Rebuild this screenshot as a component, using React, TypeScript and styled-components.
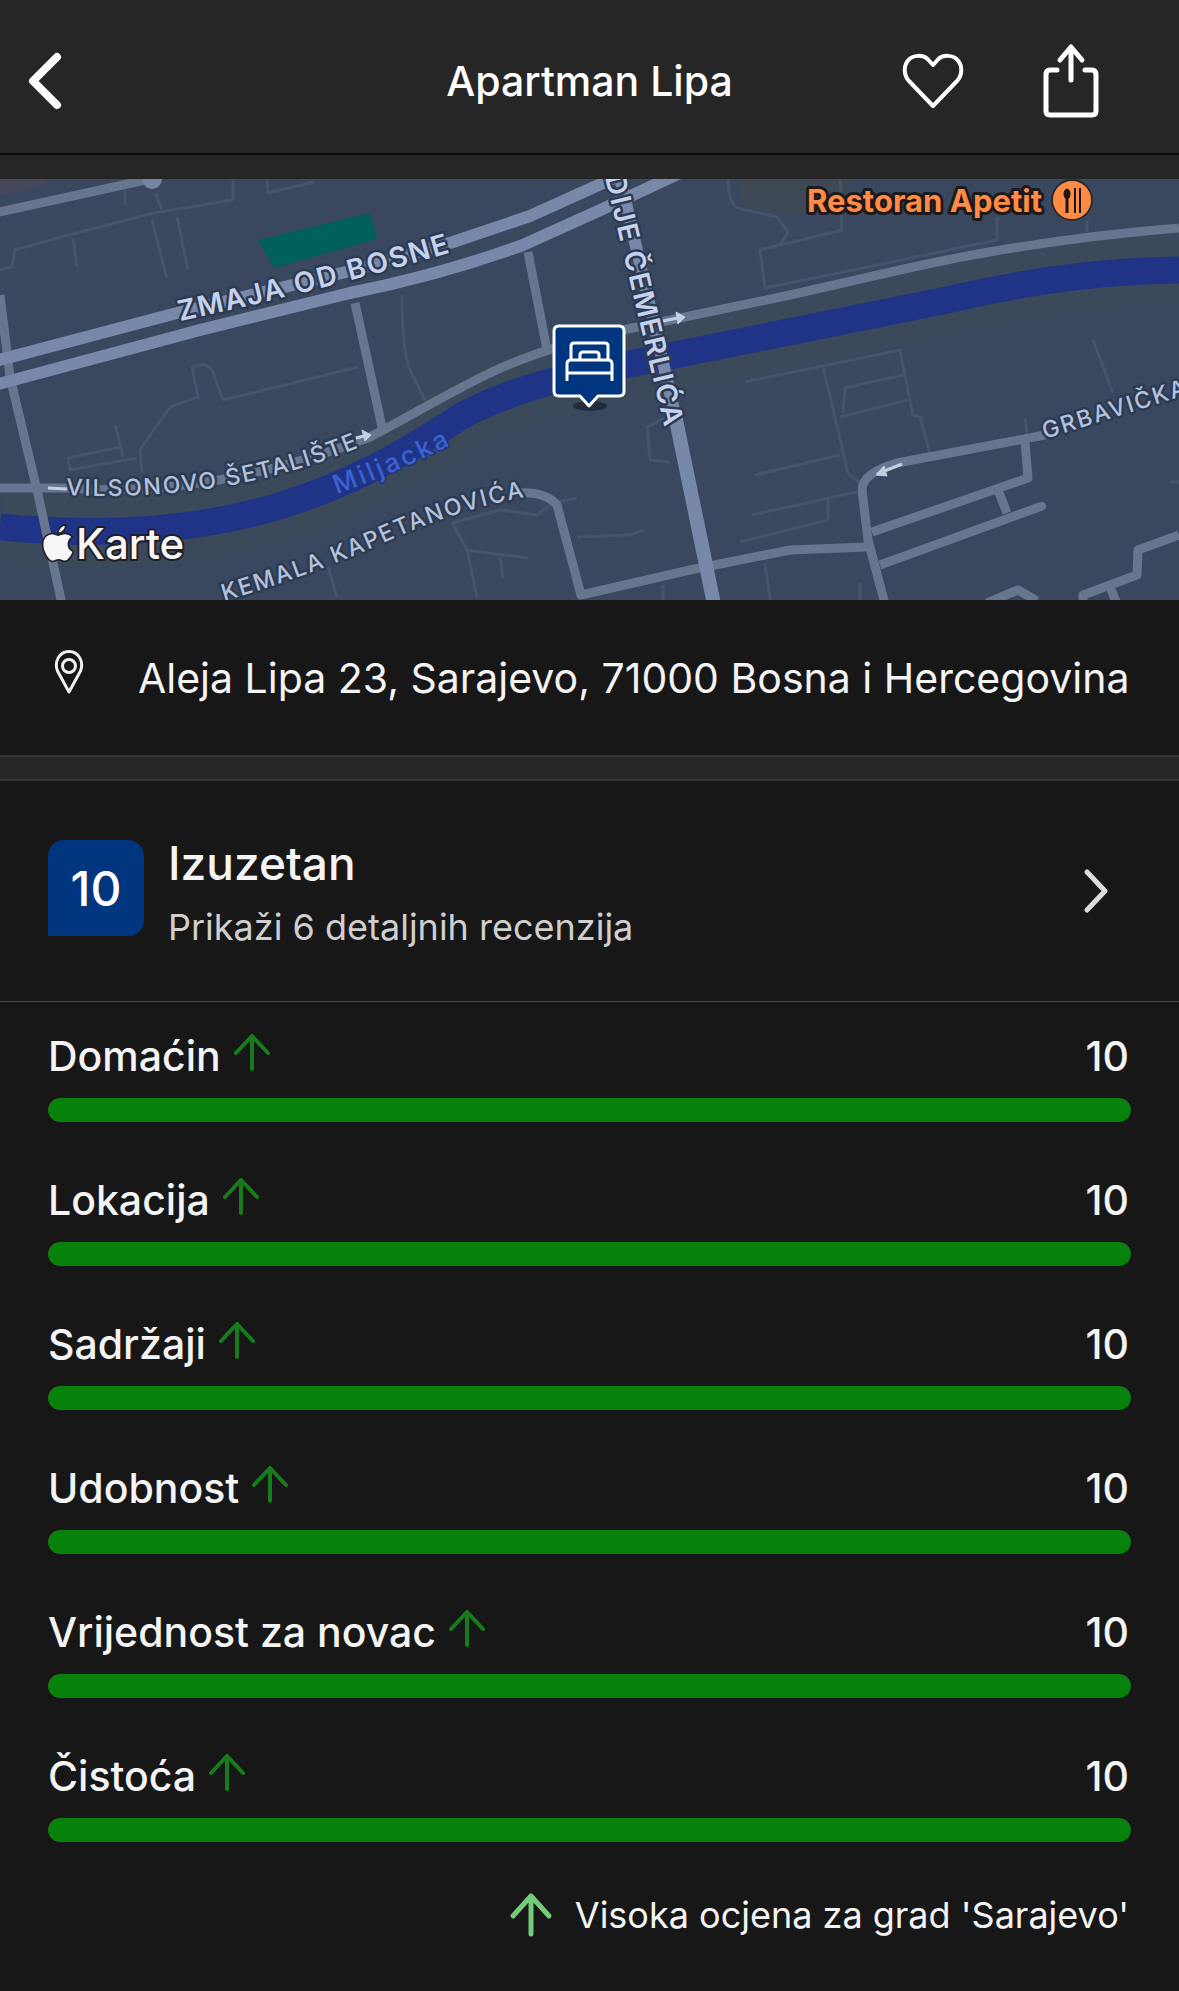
import React from "react";
import styled, { createGlobalStyle } from "styled-components";
import { FaApple } from "react-icons/fa";

const GlobalStyle = createGlobalStyle`
  *, *::before, *::after { box-sizing: border-box; }
  body {
    margin: 0;
    background: #171717;
    color: #f4f4f4;
    font-family: Inter, "Noto Sans", sans-serif;
  }
  h1, h2, p, ul { margin: 0; padding: 0; }
  ul { list-style: none; }
`;

const Page = styled.div`
  display: flex;
  flex-direction: column;
  min-height: 100vh;
  background: #171717;
`;

const Header = styled.header`
  display: grid;
  grid-template-columns: 1fr auto 1fr;
  align-items: center;
  padding: 8px 68px 0 4px;
  height: 153px;
  background: #262626;
`;

const HeaderTitle = styled.h1`
  font-size: 41px;
  line-height: 52px;
  font-weight: 500;
  color: #ffffff;
  padding-left: 64px;
`;

const Actions = styled.div`
  display: flex;
  justify-content: flex-end;
  gap: 58px;
`;

const IconButton = styled.button`
  display: flex;
  align-items: center;
  justify-content: center;
  width: 80px;
  height: 80px;
  padding: 0;
  border: 0;
  background: none;
  color: #ffffff;
  cursor: pointer;
`;

const HeaderGap = styled.div`
  height: 26px;
  background: #262626;
  border-top: 2px solid #0c0c0c;
`;

const MapView = styled.svg`
  display: block;
  width: 100%;
  height: auto;
  background: #39485e;
  font-family: Inter, "Noto Sans", sans-serif;
`;

const StreetLabel = styled.text<{ $major?: boolean }>`
  font-size: ${(p) => (p.$major ? 28 : 23)}px;
  font-weight: ${(p) => (p.$major ? 600 : 500)};
  letter-spacing: 2px;
  fill: ${(p) => (p.$major ? "#c6d2ec" : "#b4c1da")};
  stroke: #2c3a52;
  stroke-width: 5px;
  stroke-linejoin: round;
  paint-order: stroke;
`;

const RiverLabel = styled.text`
  font-size: 26px;
  font-weight: 500;
  letter-spacing: 3px;
  fill: #3c61d2;
  stroke: #1f3586;
  stroke-width: 3px;
  paint-order: stroke;
`;

const PlaceLabel = styled.text`
  font-size: 31px;
  font-weight: 700;
  fill: #ff8b45;
  stroke: #1e1a1c;
  stroke-width: 6px;
  stroke-linejoin: round;
  paint-order: stroke;
`;

const Attribution = styled.text`
  font-size: 42px;
  font-weight: 500;
  fill: #f6f6f6;
  stroke: #1f2024;
  stroke-width: 4px;
  stroke-linejoin: round;
  paint-order: stroke;
`;

const AddressRow = styled.section`
  display: flex;
  align-items: center;
  gap: 54px;
  height: 155px;
  padding: 0 48px 0 54px;
`;

const PinIcon = styled.svg`
  flex: none;
  margin-bottom: 12px;
`;

const AddressText = styled.p`
  font-size: 41px;
  line-height: 52px;
  white-space: nowrap;
`;

const Separator = styled.div`
  height: 26px;
  background: #262626;
  border: solid #343434;
  border-width: 2px 0;
`;

const ScoreButton = styled.button`
  display: flex;
  align-items: center;
  gap: 24px;
  width: 100%;
  height: 221px;
  padding: 0 69px 6px 48px;
  border: 0;
  border-bottom: 1px solid #484848;
  background: none;
  color: inherit;
  font: inherit;
  text-align: left;
  cursor: pointer;
`;

const ScoreBadge = styled.span`
  display: flex;
  align-items: center;
  justify-content: center;
  width: 96px;
  height: 96px;
  border-radius: 16px 16px 16px 0;
  background: #003580;
  color: #ffffff;
  font-size: 48px;
  font-weight: 500;
`;

const ScoreTexts = styled.span`
  display: flex;
  flex: 1;
  flex-direction: column;
  gap: 14px;
  padding-top: 8px;
`;

const ScoreTitle = styled.span`
  font-size: 46px;
  line-height: 56px;
  font-weight: 500;
`;

const ScoreSubtitle = styled.span`
  font-size: 36px;
  line-height: 44px;
  color: #cfcfcf;
`;

const Chevron = styled.svg`
  flex: none;
  margin-top: 6px;
`;

const RatingList = styled.ul`
  display: flex;
  flex-direction: column;
  gap: 52px;
  padding: 28px 48px 0;
`;

const RatingItem = styled.li`
  display: flex;
  flex-direction: column;
  gap: 16px;
`;

const RatingHead = styled.div`
  display: flex;
  align-items: center;
  gap: 12px;
  height: 52px;
  padding: 0 2px 0 0;
  font-size: 41px;
  line-height: 52px;
  font-weight: 500;
`;

const RatingArrow = styled.svg`
  margin-bottom: 8px;
`;

const RatingValue = styled.span`
  margin-left: auto;
`;

const Track = styled.div`
  height: 24px;
  border-radius: 12px;
  background: #2d2d2d;
  overflow: hidden;
`;

const Fill = styled.div`
  height: 100%;
  border-radius: 12px;
  background: #07820b;
`;

const Legend = styled.p`
  display: flex;
  align-items: center;
  justify-content: flex-end;
  gap: 22px;
  padding: 48px 50px;
  font-size: 36px;
  line-height: 50px;
`;

const ratings = [
  { label: "Domaćin", value: 10 },
  { label: "Lokacija", value: 10 },
  { label: "Sadržaji", value: 10 },
  { label: "Udobnost", value: 10 },
  { label: "Vrijednost za novac", value: 10 },
  { label: "Čistoća", value: 10 },
];

const BackIcon = () => (
  <svg width="40" height="64" viewBox="0 0 40 64" fill="none" aria-hidden="true">
    <path d="M33 8 9 32l24 24" stroke="currentColor" strokeWidth="8" strokeLinecap="round" strokeLinejoin="round" />
  </svg>
);

const HeartIcon = () => (
  <svg width="64" height="60" viewBox="0 0 64 60" fill="none" aria-hidden="true">
    <path
      d="M32 55 8 30C2.500 24 2.500 15 7 9.500 12 3.500 22 3.500 27 8.500L32 14l5-5.500C42 3.500 52 3.500 57 9.500c4.500 5.500 4.500 14.500-1 20.500Z"
      stroke="currentColor"
      strokeWidth="4"
      strokeLinejoin="round"
    />
  </svg>
);

const ShareIcon = () => (
  <svg width="58" height="76" viewBox="0 0 58 76" fill="none" stroke="currentColor" strokeWidth="5" strokeLinecap="round" strokeLinejoin="round" aria-hidden="true">
    <path d="M15 27H8q-4 0-4 5v36q0 4 4 4h42q4 0 4-4V32q0-5-4-5h-7" />
    <path d="M29 37V5M18 17 29 4l11 13" />
  </svg>
);

const Pin = () => (
  <PinIcon width="30" height="46" viewBox="0 0 30 46" fill="none" stroke="#f0f0f0" strokeWidth="3" strokeLinejoin="round" aria-hidden="true">
    <path d="M15 43 3.500 22C0 13 5 2.500 15 2.500S30 13 26.500 22Z" />
    <circle cx="15" cy="17" r="6.500" />
  </PinIcon>
);

const UpArrow = () => (
  <RatingArrow width="38" height="38" viewBox="0 0 38 38" fill="none" stroke="#177d1b" strokeWidth="4" strokeLinecap="round" strokeLinejoin="round" aria-hidden="true">
    <path d="M19 36V3M3 20 19 3l16 17" />
  </RatingArrow>
);

const minorStreets = [
  "M0 91 12 88 15 71 61 58 154 34 233 21V0",
  "M73 59 77 88M125 11V26M155 14 162 31M152 41 167 99M177 38 188 91",
  "M267 0 268 14 314 3",
  "M358 188 223 221 212 191Q205 182 192 188L198 218 170 228 140 271 142 294",
  "M115 246 123 278M120 268 68 279 70 291 137 279M328 388 337 418",
  "M402 116Q402 170 410 191L425 221",
  "M728 0Q728 22 737 29L777 38 788 53 780 66M780 66 842 51 840 0",
  "M780 66 760 71 765 109 863 89 997 61V38M1087 53V41",
  "M745 203 900 171 913 236 920 238 930 274",
  "M823 188 848 294 860 304M843 234 845 209 903 196M840 238 908 221",
  "M755 296 840 276M752 336 857 313M828 318V341L740 363",
  "M667 238 647 248 650 281 670 283",
  "M452 344 500 331 537 336 553 324 577 319M452 344 467 371 477 418M467 371 528 379M500 378 503 399",
  "M577 358 630 356 643 351M663 406V421M765 384 770 421M860 404V421",
  "M1093 161 1113 214M1025 239 1027 254M1170 303H1179",
];

const localStreets = [
  "M-5 34 150 0",
  "M0 116 10 198 37 311 62 425",
  "M0 309H66Q210 320 370 258C405 240 450 213 490 194Q545 168 623 151L790 116 913 88C990 71 1070 58 1179 49",
  "M355 124 382 248M528 73 547 171",
  "M517 314Q545 312 557 326L581 416 690 391 790 371 867 368",
  "M1045 256 897 284Q862 294 862 311L868 361 885 425",
  "M1025 263 1028 299 872 353M880 386 1042 327M998 311 1007 334",
  "M1179 356 1138 371 1137 396 1083 416V425M1110 408 1117 425M987 424 1018 411 1037 422",
];

const mainRoads = [
  "M-5 182 177 134 350 92 453 63 530 37 603 4 625-6",
  "M-5 206 200 151 350 114Q440 96 523 66L607 28 680-6",
  "M618-10 677 244",
];

const river = "M0 348C230 370 350 310 460 238Q520 204 640 183L947 121Q1070 92 1179 91";

const LocationMap = () => (
  <MapView viewBox="0 0 1179 421" role="img" aria-label="Karta lokacije">
    <defs>
      <path id="zmaja" d="M180 142Q330 110 475 66" />
      <path id="vilsonovo" d="M66 316Q145 320 220 308T372 263" />
      <path id="miljacka" d="M337 315Q400 293 470 256" />
      <path id="kemala" d="M224 422Q310 397 390 361T545 315" />
      <path id="cemerlica" d="M595-44 665 250" />
      <path id="grbavicka" d="M1045 260 1240 199" />
    </defs>
    <path d="M0 0H48L42 7 0 17Z" fill="#46475b" />
    <path d="M740 0H850L840 30Q780 40 740 26Z" fill="#3f4956" />
    <path d={river} fill="none" stroke="#3b4a5b" strokeWidth="72" />
    <path d="M258 61 370 34 377 60 274 89Z" fill="#00605a" />
    <g fill="none" stroke="#44546b" strokeWidth="3" strokeLinejoin="round">
      {minorStreets.map((d) => <path key={d} d={d} />)}
    </g>
    <path d={river} fill="none" stroke="#1f3487" strokeWidth="27" />
    <g fill="none" stroke="#66768f" strokeWidth="9" strokeLinejoin="round">
      {localStreets.map((d) => <path key={d} d={d} />)}
    </g>
    <circle cx="152" cy="0" r="10" fill="#7485a2" />
    <circle cx="1042" cy="327" r="4" fill="#66768f" />
    <g fill="none" stroke="#7888a8" strokeWidth="12" strokeLinejoin="round">
      {mainRoads.map((d) => <path key={d} d={d} />)}
      <path d="M675 236 714 425" strokeWidth="14" />
    </g>
    <g fill="none" stroke="#c3cfe0" strokeWidth="3">
      <path d="M48 309 67 310M356 259 368 256M663 142 683 138M902 285 877 295" />
      <path d="M362 251 371 256 365 262ZM676 133 685 138 678 145ZM884 287 876 296 887 297Z" fill="#c3cfe0" strokeWidth="1" />
    </g>
    <StreetLabel $major><textPath href="#zmaja">ZMAJA OD BOSNE</textPath></StreetLabel>
    <StreetLabel><textPath href="#vilsonovo">VILSONOVO ŠETALIŠTE</textPath></StreetLabel>
    <RiverLabel><textPath href="#miljacka">Miljacka</textPath></RiverLabel>
    <StreetLabel><textPath href="#kemala">KEMALA KAPETANOVIĆA</textPath></StreetLabel>
    <StreetLabel $major textAnchor="end"><textPath href="#cemerlica" startOffset="100%">DIJE ČEMERLIĆA</textPath></StreetLabel>
    <StreetLabel><textPath href="#grbavicka">GRBAVIČKA</textPath></StreetLabel>
    <PlaceLabel x="1042" y="33" textAnchor="end">Restoran Apetit</PlaceLabel>
    <circle cx="1072" cy="21" r="20" fill="#ff8b45" stroke="#2c2a2c" strokeWidth="2" />
    <g stroke="#1b1715" fill="#1b1715">
      <ellipse cx="1067" cy="15" rx="3" ry="5" />
      <path d="M1067 18V34" strokeWidth="3" />
      <path d="M1075 9V34M1080 9V34" strokeWidth="2" />
    </g>
    <ellipse cx="590" cy="227" rx="17" ry="5" fill="#232c3b" />
    <path d="M559 147H619Q624 147 624 152V212Q624 217 619 217H598L589 227 580 217H559Q554 217 554 212V152Q554 147 559 147Z" fill="#003580" stroke="#ffffff" strokeWidth="3" strokeLinejoin="round" />
    <g fill="none" stroke="#ffffff" strokeWidth="3" strokeLinejoin="round">
      <path d="M571 181V167Q571 164 574 164H605Q608 164 608 167V181" />
      <path d="M580 181V176Q580 173 583 173H596Q599 173 599 176V181" />
      <path d="M567 202V185Q567 181 571 181H608Q612 181 612 185V202M567 194H612" />
    </g>
    <FaApple x="37" y="343" size={42} color="#f6f6f6" stroke="#1f2024" strokeWidth="20" />
    <Attribution x="76" y="380">Karte</Attribution>
  </MapView>
);

export default function App() {
  return (
    <Page>
      <GlobalStyle />
      <Header>
        <IconButton type="button" aria-label="Nazad"><BackIcon /></IconButton>
        <HeaderTitle>Apartman Lipa</HeaderTitle>
        <Actions>
          <IconButton type="button" aria-label="Sačuvaj"><HeartIcon /></IconButton>
          <IconButton type="button" aria-label="Podijeli"><ShareIcon /></IconButton>
        </Actions>
      </Header>
      <HeaderGap />
      <LocationMap />
      <AddressRow>
        <Pin />
        <AddressText>Aleja Lipa 23, Sarajevo, 71000 Bosna i Hercegovina</AddressText>
      </AddressRow>
      <Separator />
      <ScoreButton type="button">
        <ScoreBadge>10</ScoreBadge>
        <ScoreTexts>
          <ScoreTitle>Izuzetan</ScoreTitle>
          <ScoreSubtitle>Prikaži 6 detaljnih recenzija</ScoreSubtitle>
        </ScoreTexts>
        <Chevron width="28" height="48" viewBox="0 0 28 48" fill="none" aria-hidden="true">
          <path d="M5 5 23 24 5 43" stroke="#dcdcdc" strokeWidth="5" strokeLinecap="round" strokeLinejoin="round" />
        </Chevron>
      </ScoreButton>
      <RatingList>
        {ratings.map((r) => (
          <RatingItem key={r.label}>
            <RatingHead>
              <span>{r.label}</span>
              <UpArrow />
              <RatingValue>{r.value}</RatingValue>
            </RatingHead>
            <Track role="meter" aria-label={r.label} aria-valuemin={0} aria-valuemax={10} aria-valuenow={r.value}>
              <Fill style={{ width: `${r.value * 10}%` }} />
            </Track>
          </RatingItem>
        ))}
      </RatingList>
      <Legend>
        <svg width="44" height="46" viewBox="0 0 44 46" fill="none" stroke="#72cc7a" strokeWidth="5" strokeLinecap="round" strokeLinejoin="round" aria-hidden="true">
          <path d="M22 42V4M4 24 22 4l18 20" />
        </svg>
        <span>Visoka ocjena za grad 'Sarajevo'</span>
      </Legend>
    </Page>
  );
}
